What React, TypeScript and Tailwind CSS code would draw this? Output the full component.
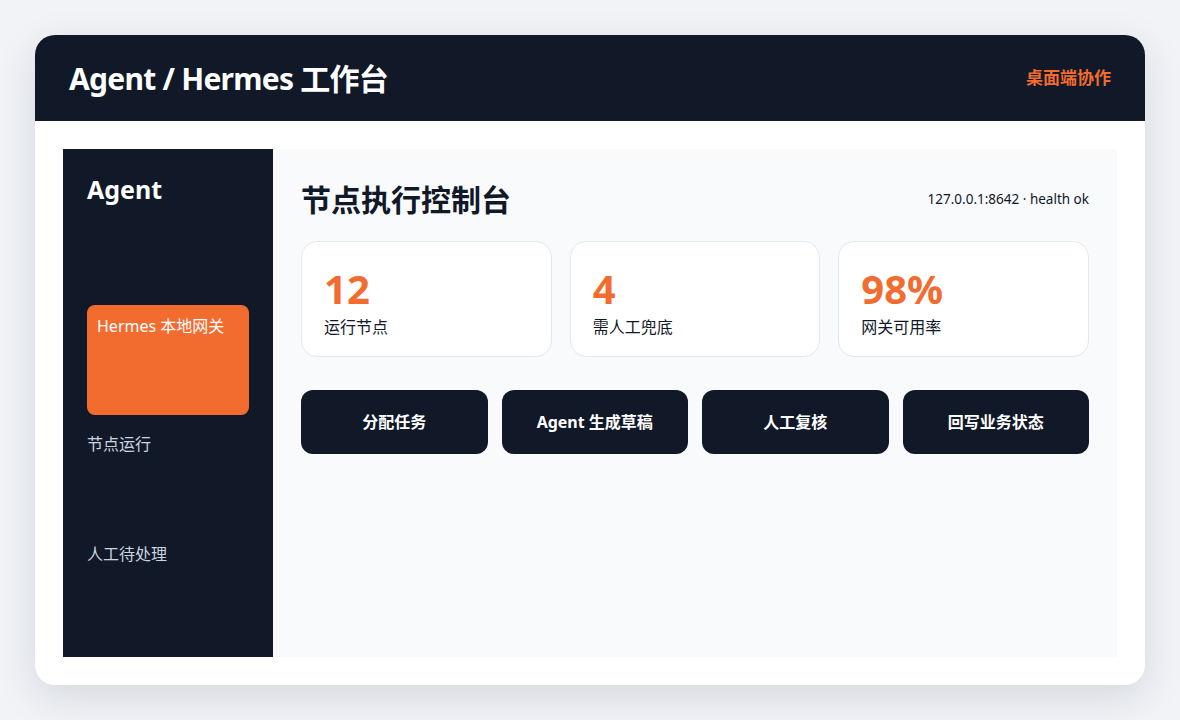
const stats = [
  { value: '12', label: '运行节点' },
  { value: '4', label: '需人工兜底' },
  { value: '98%', label: '网关可用率' },
]

const actions = ['分配任务', 'Agent 生成草稿', '人工复核', '回写业务状态']

const navItems = ['Hermes 本地网关', '节点运行', '人工待处理']

export default function App() {
  return (
    <div
      className="min-h-[720px] w-full bg-[#f1f3f7] p-[35px]"
      style={{ fontFamily: '"Noto Sans", "Noto Sans CJK SC", sans-serif' }}
    >
      <div className="h-[650px] overflow-hidden rounded-[20px] bg-white shadow-[0_12px_40px_rgba(15,23,42,0.12)] flex flex-col">
        {/* Header */}
        <div className="h-[86px] shrink-0 bg-[#111827] px-[34px] flex items-center justify-between">
          <h1 className="text-[30px] font-bold text-white tracking-tight">Agent / Hermes 工作台</h1>
          <span className="text-[17px] font-bold text-[#f26b2f]">桌面端协作</span>
        </div>

        {/* Body */}
        <div className="flex-1 p-[28px] flex">
          {/* Sidebar */}
          <aside className="w-[210px] shrink-0 bg-[#111827] px-[24px] pt-[24px]">
            <div className="text-[25px] font-bold text-white leading-[32px]">Agent</div>
            <nav className="mt-[100px] flex flex-col">
              {navItems.map((item, i) =>
                i === 0 ? (
                  <div
                    key={item}
                    className="h-[110px] rounded-[8px] bg-[#f26b2f] px-[10px] pt-[10px] text-[16px] leading-[22px] text-white"
                  >
                    {item}
                  </div>
                ) : (
                  <div key={item} className="h-[110px] pt-[18px] text-[16px] leading-[22px] text-[#cbd5e1]">
                    {item}
                  </div>
                )
              )}
            </nav>
          </aside>

          {/* Main */}
          <main className="flex-1 bg-[#f8fafc] p-[28px]">
            <div className="flex items-center justify-between h-[44px]">
              <h2 className="text-[30px] font-bold text-[#111827]">节点执行控制台</h2>
              <span className="text-[13.5px] text-[#111827]">127.0.0.1:8642 · health ok</span>
            </div>

            <div className="mt-[20px] grid grid-cols-3 gap-[18px]">
              {stats.map((s) => (
                <div
                  key={s.label}
                  className="h-[116px] rounded-[16px] border border-[#e2e8f0] bg-white px-[22px] pt-[25px]"
                >
                  <div className="text-[40px] font-bold leading-[44px] text-[#f26b2f]">{s.value}</div>
                  <div className="mt-[6px] text-[16px] leading-[20px] text-[#111827]">{s.label}</div>
                </div>
              ))}
            </div>

            <div className="mt-[33px] grid grid-cols-4 gap-[14px]">
              {actions.map((a) => (
                <button
                  key={a}
                  className="h-[64px] rounded-[12px] bg-[#111827] text-[16px] font-bold text-white"
                >
                  {a}
                </button>
              ))}
            </div>
          </main>
        </div>
      </div>
    </div>
  )
}
